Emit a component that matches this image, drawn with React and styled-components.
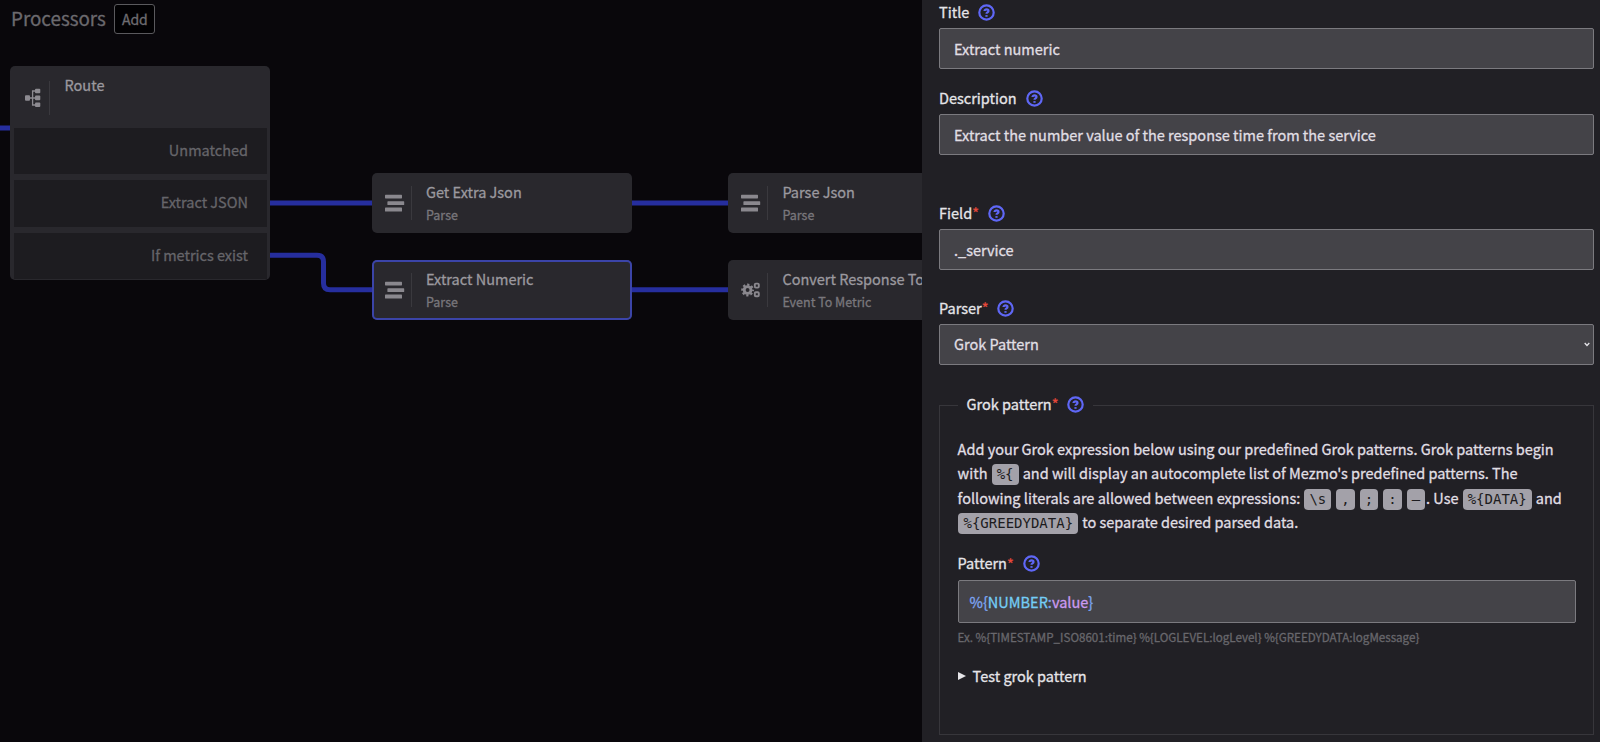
import styled, { createGlobalStyle } from "styled-components"

const routes = ['Unmatched', 'Extract JSON', 'If metrics exist'];

const nodes = [
    { title: 'Get Extra Json', type: 'Parse', x: 372, y: 173, icon: 'parse' },
    { title: 'Extract Numeric', type: 'Parse', x: 372, y: 260, icon: 'parse', selected: true },
    { title: 'Parse Json', type: 'Parse', x: 728.4, y: 173, icon: 'parse' },
    { title: 'Convert Response To', type: 'Event To Metric', x: 728.4, y: 260, icon: 'gears' },
];

const edges = [
    'M0 128H10',
    'M270 203H372',
    'M270 255.3H317Q323.5 255.3 323.5 261.8V283.2Q323.5 289.7 330 289.7H372',
    'M632 203H728',
    'M632 289.7H728',
];

function HelpIcon() {
    return (
        <HelpSvg viewBox='0 0 17 17'>
            <circle cx='8.5' cy='8.5' r='7.2' />
            <path d='M6.5 7.1C6.5 4.7 10.5 4.8 10.5 7C10.5 8.3 8.5 8.3 8.5 9.7' />
            <path d='M8.5 11.1V12.8' />
        </HelpSvg>
    )
}

function RouteIcon() {
    return (
        <svg width='16' height='20' viewBox='0 0 16 20' fill='#8d8b91'>
            <rect x='0' y='7.2' width='5' height='5.6' rx='1' />
            <rect x='10' y='0.8' width='5.3' height='4.4' rx='1' />
            <rect x='10' y='7.6' width='5.3' height='4.6' rx='1' />
            <rect x='10' y='14.6' width='5.3' height='4.4' rx='1' />
            <path d='M5 10H10M10 3H7.6V17H10' fill='none' stroke='#8d8b91' strokeWidth='1.3' />
        </svg>
    )
}

function ParseIcon() {
    return (
        <svg width='20' height='18' viewBox='0 0 20 18' fill='#8a888e'>
            <rect x='0' y='0.8' width='17' height='3.6' rx='0.6' />
            <rect x='2.4' y='7.3' width='16.8' height='3.7' rx='0.6' />
            <rect x='0' y='13.6' width='17' height='3.9' rx='0.6' />
        </svg>
    )
}

function GearsIcon() {
    return (
        <svg width='20' height='18' viewBox='0 0 20 18' fill='none' stroke='#8a888e'>
            <circle cx='6.6' cy='9' r='3.4' strokeWidth='2.9' />
            <circle cx='6.6' cy='9' r='5.3' strokeWidth='2.2' strokeDasharray='2.2 1.963' strokeDashoffset='1.1' />
            <rect x='13.8' y='2.6' width='4' height='4' rx='1' strokeWidth='1.9' />
            <rect x='13.8' y='11.2' width='4' height='4' rx='1' strokeWidth='1.9' />
        </svg>
    )
}

function FieldLabel({ text, required }) {
    return (
        <Label>
            {text}
            {required ? <Required>*</Required> : null}
            <HelpIcon />
        </Label>
    )
}

function App() {
    return (
        <Page>
            <GlobalStyle />
            <Canvas>
                <Heading>
                    <h1>Processors</h1>
                    <AddButton>Add</AddButton>
                </Heading>
                <Edges viewBox='0 0 922 742'>
                    {edges.map((d) => <path key={d} d={d} />)}
                </Edges>
                <RouteNode>
                    <RouteHeader>
                        <IconCell $inset={15}><RouteIcon /></IconCell>
                        <RouteTitle>Route</RouteTitle>
                    </RouteHeader>
                    {routes.map((route) => <RouteRow key={route}>{route}</RouteRow>)}
                </RouteNode>
                {nodes.map((node) => (
                    <Node key={node.title} $x={node.x} $y={node.y} $selected={node.selected}>
                        <IconCell $inset={13}>{node.icon === 'gears' ? <GearsIcon /> : <ParseIcon />}</IconCell>
                        <NodeText>
                            <NodeTitle>{node.title}</NodeTitle>
                            <NodeType>{node.type}</NodeType>
                        </NodeText>
                    </Node>
                ))}
            </Canvas>

            <Panel>
                <Field $space={18}>
                    <FieldLabel text='Title' />
                    <Input type='text' defaultValue='Extract numeric' />
                </Field>
                <Field $space={47}>
                    <FieldLabel text='Description' />
                    <Input type='text' defaultValue='Extract the number value of the response time from the service' />
                </Field>
                <Field $space={27}>
                    <FieldLabel text='Field' required />
                    <Input type='text' defaultValue='._service' />
                </Field>
                <Field $space={28}>
                    <FieldLabel text='Parser' required />
                    <SelectBox>
                        <Select defaultValue='grok'>
                            <option value='grok'>Grok Pattern</option>
                        </Select>
                        <svg width='6' height='5' viewBox='0 0 6 5'>
                            <path d='M0.7 1L3 3.5L5.3 1' fill='none' stroke='#e6e5e9' strokeWidth='1.3' />
                        </svg>
                    </SelectBox>
                </Field>

                <Group>
                    <Legend>
                        <FieldLabel text='Grok pattern' required />
                    </Legend>
                    <Help>
                        Add your Grok expression below using our predefined Grok patterns. Grok patterns begin<br />
                        with <Code>%{'{'}</Code> and will display an autocomplete list of Mezmo's predefined patterns. The<br />
                        following literals are allowed between expressions: <Code>\s</Code> <Code>,</Code> <Code>;</Code> <Code>:</Code> <Code>–</Code>. Use <Code>{'%{DATA}'}</Code> and<br />
                        <Code>{'%{GREEDYDATA}'}</Code> to separate desired parsed data.
                    </Help>
                    <FieldLabel text='Pattern' required />
                    <PatternInput>
                        <Token $color='#7ea6f4'>{'%{'}</Token>
                        <Token $color='#74cdf6'>NUMBER</Token>
                        <Token $color='#7ea6f4'>:</Token>
                        <Token $color='#cb9af0'>value</Token>
                        <Token $color='#7ea6f4'>{'}'}</Token>
                    </PatternInput>
                    <Example>{'Ex. %{TIMESTAMP_ISO8601:time} %{LOGLEVEL:logLevel} %{GREEDYDATA:logMessage}'}</Example>
                    <TestToggle>
                        <svg width='8' height='8' viewBox='0 0 8 8' fill='#e6e5e9'>
                            <path d='M0 0L8 4L0 8Z' />
                        </svg>
                        Test grok pattern
                    </TestToggle>
                </Group>
            </Panel>
        </Page>
    )
}

export default App

const GlobalStyle = createGlobalStyle`
    *{
        box-sizing: border-box;
    }
    body{
        margin: 0;
        background: #09070b;
        overflow: hidden;
        -webkit-text-stroke: 0.3px;
    }
    body, button, input, select{
        font-family: 'Noto Sans CJK SC', 'Noto Sans', sans-serif;
        font-size: 14.5px;
    }
`

const Page = styled.div`
    display: flex;
    width: 1600px;
    height: 742px;
    overflow: hidden;
`

const Canvas = styled.div`
    position: relative;
    width: 922px;
    overflow: hidden;
    background: #09070b;
`

const Heading = styled.div`
    display: flex;
    align-items: center;
    gap: 8.5px;
    padding: 4px 0 0 11px;
    h1{
        margin: 0;
        font-size: 18.8px;
        font-weight: 400;
        line-height: 28px;
        padding-bottom: 2px;
        color: #6b696e;
    }
`

const AddButton = styled.button`
    width: 41px;
    height: 30px;
    padding: 0;
    font-size: 14px;
    line-height: 20px;
    background: #020103;
    color: #6e6c71;
    border: 1px solid #5a595d;
    border-radius: 3px;
`

const Edges = styled.svg`
    position: absolute;
    top: 0;
    left: 0;
    width: 922px;
    height: 742px;
    path{
        fill: none;
        stroke: #262e9e;
        stroke-width: 5;
    }
`

const RouteNode = styled.div`
    position: absolute;
    left: 9.5px;
    top: 65.5px;
    width: 260.5px;
    height: 214px;
    display: flex;
    flex-direction: column;
    gap: 6px;
    padding: 0 3.5px 0 4px;
    background: #29282d;
    border-radius: 5px;
`

const RouteHeader = styled.div`
    display: flex;
    align-items: flex-start;
    height: 56.5px;
    padding: 12px 0 0;
    margin-left: -4px;
`

const IconCell = styled.div`
    display: flex;
    align-items: center;
    flex-shrink: 0;
    width: 40px;
    height: 40px;
    padding-left: ${({ $inset }) => $inset}px;
    margin-right: 14px;
    background: linear-gradient(#3a393e, #3a393e) right center / 1px 34px no-repeat;
    svg{
        flex-shrink: 0;
    }
`

const RouteRow = styled.div`
    height: 46.3px;
    padding-right: 18.5px;
    line-height: 44px;
    text-align: right;
    color: #66656a;
    background: #1d1c20;
`

const Node = styled.div`
    position: absolute;
    left: ${({ $x }) => $x}px;
    top: ${({ $y }) => $y}px;
    width: 260px;
    height: 60px;
    display: flex;
    align-items: center;
    background: #29282d;
    border-radius: 5px;
    box-shadow: ${({ $selected }) => $selected ? 'inset 0 0 0 2px #3b44a8' : 'none'};
`

const NodeText = styled.div`
    padding-top: 1px;
    white-space: nowrap;
`

const NodeTitle = styled.div`
    line-height: 22px;
    color: #9b999f;
`

const RouteTitle = styled(NodeTitle)`
    margin: -4px 0 0 1px;
`

const NodeType = styled.div`
    font-size: 12.5px;
    line-height: 23px;
    color: #79777c;
`

const Panel = styled.div`
    width: 678px;
    padding: 1px 6px 0 17px;
    background: #212025;
`

const Field = styled.div`
    margin-bottom: ${({ $space }) => $space}px;
`

const Label = styled.label`
    display: flex;
    align-items: center;
    height: 22px;
    padding-bottom: 2px;
    margin-bottom: 5px;
    color: #e6e5e9;
`

const Required = styled.span`
    color: #e5483a;
    font-size: 14.5px;
    margin-top: 1px;
`

const HelpSvg = styled.svg`
    width: 17px;
    height: 17px;
    margin: 2px 0 0 9px;
    fill: none;
    stroke: #5f67f6;
    stroke-width: 2.2;
`

const Input = styled.input`
    display: block;
    width: 100%;
    height: 41px;
    padding: 0 14px 1px;
    color: #e0dfe4;
    background: #444348;
    border: 1px solid #7b7a7f;
    border-radius: 2px;
    outline: none;
`

const SelectBox = styled.div`
    display: flex;
    align-items: center;
    height: 41px;
    padding: 0 3px 0 14px;
    background: #444348;
    border: 1px solid #7b7a7f;
    border-radius: 2px;
`

const Select = styled.select`
    flex: 1;
    height: 39px;
    padding: 0 0 2px;
    appearance: none;
    color: #e0dfe4;
    background: transparent;
    border: none;
    outline: none;
`

const Group = styled.fieldset`
    height: 342px;
    margin: 0;
    padding: 19px 17px 0 17.6px;
    border: 1px solid #37363b;
`

const Legend = styled.legend`
    padding: 0 9px 3px;
    label{
        margin: 0;
    }
`

const Help = styled.p`
    margin: 0 0 18.8px;
    line-height: 24.3px;
    white-space: nowrap;
    color: #e0dfe4;
`

const Code = styled.code`
    display: inline-block;
    height: 21px;
    padding: 0 5px;
    margin: 0 0.9px;
    font-family: 'DejaVu Sans Mono', monospace;
    font-size: 14px;
    line-height: 21px;
    color: #1d1c20;
    background: #a3a1a9;
    border-radius: 4px;
    -webkit-text-stroke: 0;
`

const PatternInput = styled.div`
    display: flex;
    align-items: center;
    height: 43.5px;
    padding: 0 11px 1px;
    background: #444348;
    border: 1px solid #7b7a7f;
    border-radius: 2px;
`

const Token = styled.span`
    color: ${({ $color }) => $color};
`

const Example = styled.div`
    margin-top: 4px;
    font-size: 11.6px;
    line-height: 20px;
    color: #68676c;
`

const TestToggle = styled.div`
    display: flex;
    align-items: center;
    gap: 7px;
    margin-top: 17.5px;
    color: #e6e5e9;
    svg{
        margin-top: 1px;
    }
`
